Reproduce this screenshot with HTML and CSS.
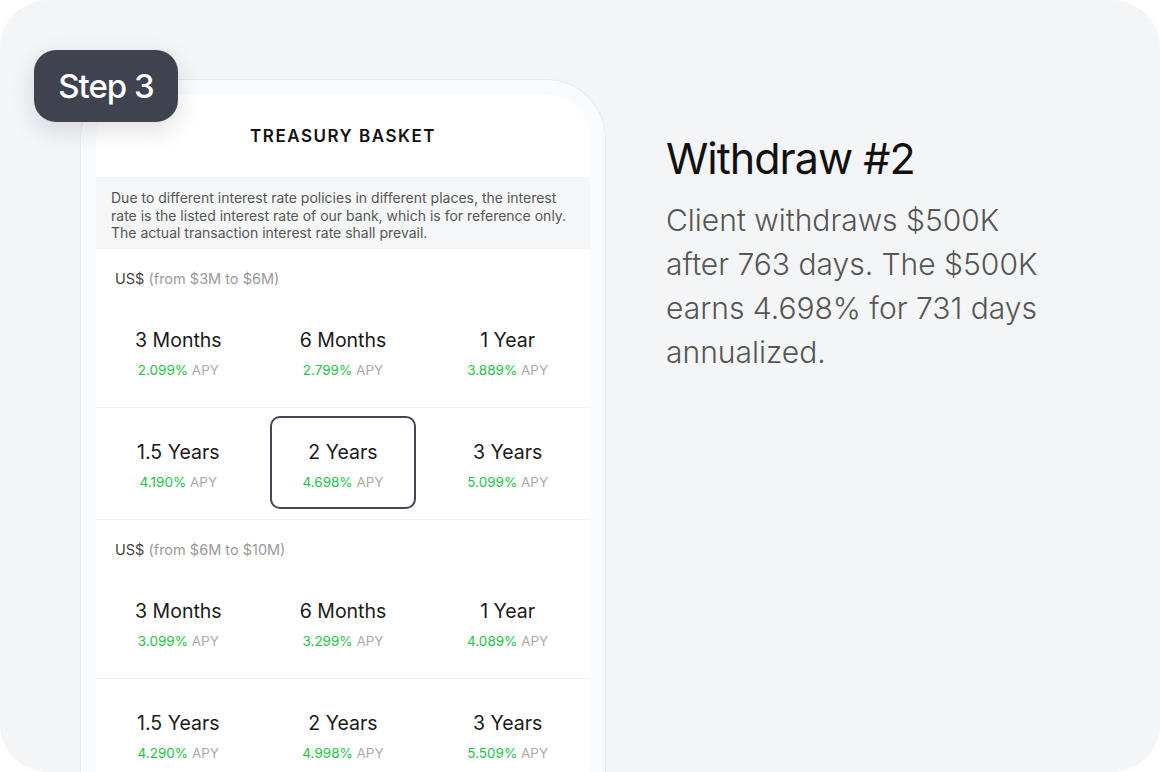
FILE: index.html
```html
<!DOCTYPE html>
<html lang="en">
<head>
    <meta charset="UTF-8">
    <meta name="viewport" content="width=device-width, initial-scale=1.0">
    <title>Withdraw #2</title>
    <link rel="stylesheet" href="styles.css">
</head>
<body>

    <div class="card">
        <div class="step-badge">Step 3</div>

        <div class="phone">
            <div class="screen">
                <div class="screen-title">TREASURY BASKET</div>

                <div class="note">
                    Due to different interest rate policies in different places, the interest
                    rate is the listed interest rate of our bank, which is for reference only.
                    The actual transaction interest rate shall prevail.
                </div>

                <div class="range"><span class="cur">US$</span> (from $3M to $6M)</div>
                <div class="row">
                    <div class="cell"><div class="option"><div class="term">3 Months</div><div class="rate"><span class="pct">2.099%</span> APY</div></div></div>
                    <div class="cell"><div class="option"><div class="term">6 Months</div><div class="rate"><span class="pct">2.799%</span> APY</div></div></div>
                    <div class="cell"><div class="option"><div class="term">1 Year</div><div class="rate"><span class="pct">3.889%</span> APY</div></div></div>
                </div>
                <div class="row">
                    <div class="cell"><div class="option"><div class="term">1.5 Years</div><div class="rate"><span class="pct">4.190%</span> APY</div></div></div>
                    <div class="cell"><div class="option selected"><div class="term">2 Years</div><div class="rate"><span class="pct">4.698%</span> APY</div></div></div>
                    <div class="cell"><div class="option"><div class="term">3 Years</div><div class="rate"><span class="pct">5.099%</span> APY</div></div></div>
                </div>

                <div class="range"><span class="cur">US$</span> (from $6M to $10M)</div>
                <div class="row">
                    <div class="cell"><div class="option"><div class="term">3 Months</div><div class="rate"><span class="pct">3.099%</span> APY</div></div></div>
                    <div class="cell"><div class="option"><div class="term">6 Months</div><div class="rate"><span class="pct">3.299%</span> APY</div></div></div>
                    <div class="cell"><div class="option"><div class="term">1 Year</div><div class="rate"><span class="pct">4.089%</span> APY</div></div></div>
                </div>
                <div class="row">
                    <div class="cell"><div class="option"><div class="term">1.5 Years</div><div class="rate"><span class="pct">4.290%</span> APY</div></div></div>
                    <div class="cell"><div class="option"><div class="term">2 Years</div><div class="rate"><span class="pct">4.998%</span> APY</div></div></div>
                    <div class="cell"><div class="option"><div class="term">3 Years</div><div class="rate"><span class="pct">5.509%</span> APY</div></div></div>
                </div>
            </div>
        </div>

        <div class="copy">
            <h1>Withdraw #2</h1>
            <p>Client withdraws $500K after 763 days. The $500K earns 4.698% for 731 days annualized.</p>
        </div>
    </div>

</body>
</html>
```

FILE: styles.css
```css
body {
    margin: 0;
    background-color: white;
    font-family: Inter, "Noto Sans", sans-serif;
}
.card {
    position: relative;
    display: flex;
    align-items: flex-start;
    width: 1160px;
    height: 772px;
    background-color: #f4f5f7;
    border-radius: 48px;
    overflow: hidden;
}
.step-badge {
    position: absolute;
    left: 34px;
    top: 50px;
    width: 144px;
    height: 72px;
    display: flex;
    align-items: center;
    justify-content: center;
    background: #3f4350;
    color: white;
    font-size: 33px;
    font-weight: 500;
    letter-spacing: -1px;
    border-radius: 22px;
    box-shadow: 0 8px 24px rgba(20, 24, 40, 0.14);
    z-index: 2;
}
.phone {
    box-sizing: border-box;
    width: 526px;
    height: 693px;
    margin: 79px 0 0 80px;
    padding: 15px 15px 0;
    background: #fafbfc;
    border: 1px solid #e9eaee;
    border-bottom: none;
    border-radius: 60px 60px 0 0;
    flex-shrink: 0;
}
.screen {
    height: 100%;
    background: white;
    border-radius: 44px 44px 0 0;
    overflow: hidden;
}
.screen-title {
    height: 82px;
    display: flex;
    align-items: center;
    justify-content: center;
    font-size: 17px;
    font-weight: 600;
    letter-spacing: 1.5px;
    color: #111;
}
.note {
    padding: 12px 15px 7px;
    background: #f5f6f8;
    font-size: 14px;
    line-height: 17.5px;
    color: #555;
}
.range {
    height: 47px;
    padding: 21px 0 0 19px;
    box-sizing: border-box;
    font-size: 14.5px;
    color: #999;
}
.cur {
    color: #444;
}
.row {
    display: grid;
    grid-template-columns: repeat(3, 1fr);
    border-bottom: 1px solid #eeeff1;
}
.cell {
    height: 111px;
    padding: 8px 9px 10px;
    box-sizing: border-box;
}
.option {
    box-sizing: border-box;
    height: 100%;
    display: flex;
    flex-direction: column;
    align-items: center;
    justify-content: center;
    gap: 10px;
    padding-top: 6px;
    border: 2px solid transparent;
    border-radius: 10px;
}
.option.selected {
    border-color: #434653;
}
.term {
    font-size: 19.5px;
    color: #1a1a1a;
}
.rate {
    font-size: 13.5px;
    color: #aaa;
}
.pct {
    color: #22c247;
}
.copy {
    margin: 131px 0 0 60px;
    width: 398px;
}
.copy h1 {
    margin: 0;
    font-size: 43px;
    line-height: 54px;
    font-weight: 400;
    letter-spacing: -1px;
    color: #111;
}
.copy p {
    margin: 13px 0 0;
    font-size: 30px;
    line-height: 44px;
    font-weight: 300;
    letter-spacing: 0;
    color: #555;
}
```
